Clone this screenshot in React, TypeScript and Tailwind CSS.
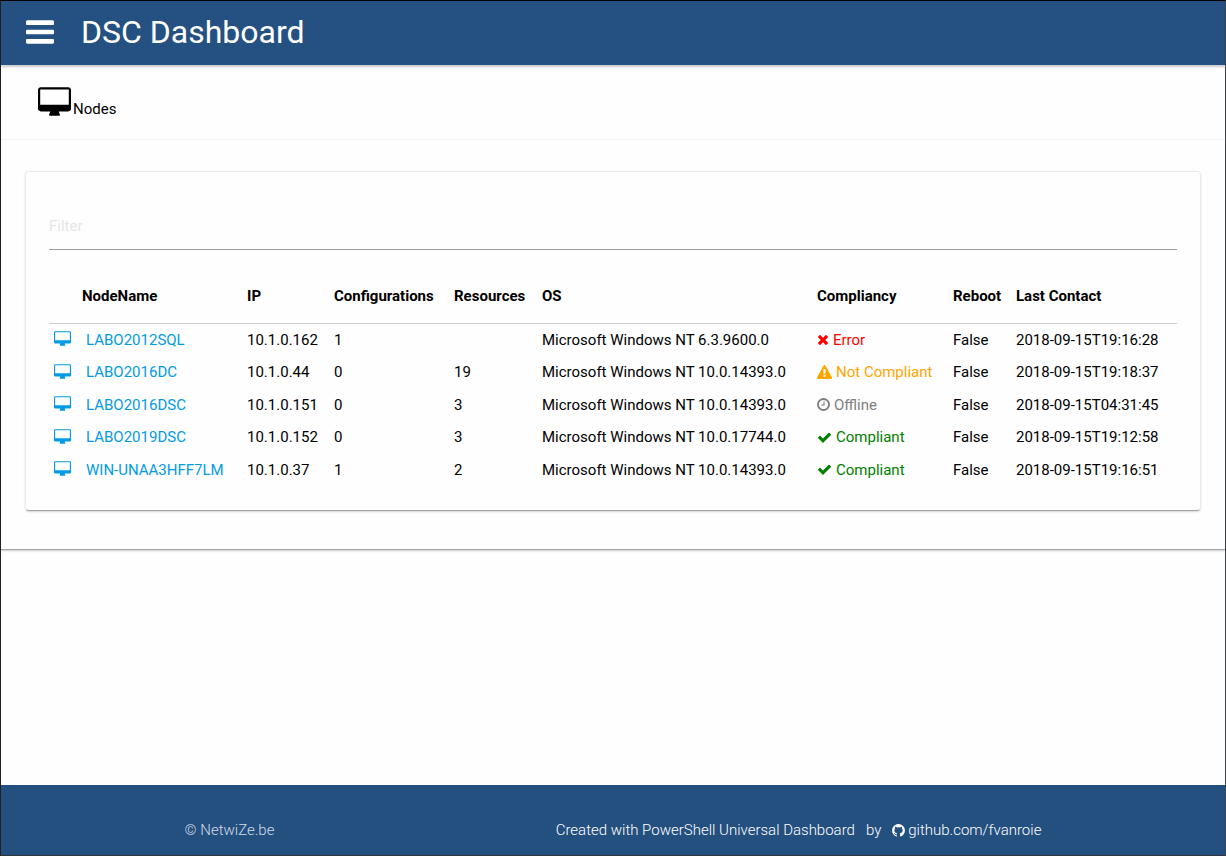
import React from "react";

const PATHS = {
  bars: "M1664 1344v128q0 26-19 45t-45 19h-1408q-26 0-45-19t-19-45v-128q0-26 19-45t45-19h1408q26 0 45 19t19 45zm0-512v128q0 26-19 45t-45 19h-1408q-26 0-45-19t-19-45v-128q0-26 19-45t45-19h1408q26 0 45 19t19 45zm0-512v128q0 26-19 45t-45 19h-1408q-26 0-45-19t-19-45v-128q0-26 19-45t45-19h1408q26 0 45 19t19 45z",
  desktop:
    "M1792 992v-832q0-13-9.5-22.5t-22.5-9.5h-1600q-13 0-22.5 9.5t-9.5 22.5v832q0 13 9.5 22.5t22.5 9.5h1600q13 0 22.5-9.5t9.5-22.5zm128-832v1088q0 66-47 113t-113 47h-544q0 37 16 77.5t32 71 16 43.5q0 26-19 45t-45 19h-512q-26 0-45-19t-19-45q0-14 16-44t32-70 16-78h-544q-66 0-113-47t-47-113v-1088q0-66 47-113t113-47h1600q66 0 113 47t47 113z",
  times:
    "M1490 1322q0 40-28 68l-136 136q-28 28-68 28t-68-28l-294-294-294 294q-28 28-68 28t-68-28l-136-136q-28-28-28-68t28-68l294-294-294-294q-28-28-28-68t28-68l136-136q28-28 68-28t68 28l294 294 294-294q28-28 68-28t68 28l136 136q28 28 28 68t-28 68l-294 294 294 294q28 28 28 68z",
  warning:
    "M1024 1375v-190q0-14-9.5-23.5t-22.5-9.5h-192q-13 0-22.5 9.5t-9.5 23.5v190q0 14 9.5 23.5t22.5 9.5h192q13 0 22.5-9.5t9.5-23.5zm-2-374l18-459q0-12-10-19-13-11-24-11h-220q-11 0-24 11-10 7-10 21l17 457q0 10 10 16.5t24 6.5h185q14 0 23.5-6.5t10.5-16.5zm-14-934l768 1408q35 63-2 126-17 29-46.5 46t-63.5 17h-1536q-34 0-63.5-17t-46.5-46q-37-63-2-126l768-1408q17-31 47-49t65-18 65 18 47 49z",
  clock:
    "M1024 544v448q0 14-9 23t-23 9h-320q-14 0-23-9t-9-23v-64q0-14 9-23t23-9h224v-352q0-14 9-23t23-9h64q14 0 23 9t9 23zm416 352q0-148-73-273t-198-198-273-73-273 73-198 198-73 273 73 273 198 198 273 73 273-73 198-198 73-273zm224 0q0 209-103 385.5t-279.5 279.5-385.5 103-385.5-103-279.5-279.5-103-385.5 103-385.5 279.5-279.5 385.5-103 385.5 103 279.5 279.5 103 385.5z",
  check:
    "M1671 566q0 40-28 68l-724 724-136 136q-28 28-68 28t-68-28l-136-136-362-362q-28-28-28-68t28-68l136-136q28-28 68-28t68 28l294 295 656-657q28-28 68-28t68 28l136 136q28 28 28 68z",
  github:
    "M896 128q209 0 385.5 103t279.5 279.5 103 385.5q0 251-146.5 451.5t-378.5 277.5q-27 5-40-7t-13-30q0-3 .5-76.5t.5-134.5q0-97-52-142 57-6 102.5-18t94-39 81-66.5 53-105 20.5-150.5q0-119-79-206 37-91-8-204-28-9-81 11t-92 44l-38 24q-93-26-192-26t-192 26q-16-11-42.5-27t-83.5-38.5-85-13.5q-45 113-8 204-79 87-79 206 0 85 20.5 150t52.5 105 80.5 67 94 39 102.5 18q-39 36-49 103-21 10-45 15t-57 5-65.5-21.5-55.5-62.5q-19-32-48.5-52t-49.5-24l-20-3q-21 0-29 4.5t-5 11.5 9 14 13 12l7 5q22 10 43.5 38t31.5 51l10 23q13 38 44 61.5t67 30 69.5 7 55.5-3.5l23-4q0 38 .5 88.5t.5 54.5q0 18-13 30t-40 7q-232-77-378.5-277.5t-146.5-451.5q0-209 103-385.5t279.5-279.5 385.5-103z",
};

const VIEW_BOXES: Record<keyof typeof PATHS, string> = {
  bars: "128 256 1536 1280",
  desktop: "0 0 1920 1664",
  times: "192 0 1408 1792",
  warning: "0 0 1792 1792",
  clock: "128 0 1536 1792",
  check: "0 0 1792 1792",
  github: "128 0 1536 1792",
};

function Icon({ name, className }: { name: keyof typeof PATHS; className: string }) {
  return (
    <svg viewBox={VIEW_BOXES[name]} fill="currentColor" aria-hidden="true" className={`shrink-0 ${className}`}>
      <path d={PATHS[name]} />
    </svg>
  );
}

type Status = "Error" | "Not Compliant" | "Offline" | "Compliant";

const STATUS: Record<Status, { icon: keyof typeof PATHS; size: string; color: string }> = {
  Error: { icon: "times", size: "w-3 h-[15px]", color: "text-[#ff0000]" },
  "Not Compliant": { icon: "warning", size: "w-[15px] h-[15px]", color: "text-[#ffa500]" },
  Offline: { icon: "clock", size: "w-[13px] h-[15px]", color: "text-[#808080]" },
  Compliant: { icon: "check", size: "w-[15px] h-[15px]", color: "text-[#008000]" },
};

interface NodeRow {
  name: string;
  ip: string;
  configurations: string;
  resources: string;
  os: string;
  status: Status;
  reboot: string;
  lastContact: string;
}

const NODES: NodeRow[] = [
  { name: "LABO2012SQL", ip: "10.1.0.162", configurations: "1", resources: "", os: "Microsoft Windows NT 6.3.9600.0", status: "Error", reboot: "False", lastContact: "2018-09-15T19:16:28" },
  { name: "LABO2016DC", ip: "10.1.0.44", configurations: "0", resources: "19", os: "Microsoft Windows NT 10.0.14393.0", status: "Not Compliant", reboot: "False", lastContact: "2018-09-15T19:18:37" },
  { name: "LABO2016DSC", ip: "10.1.0.151", configurations: "0", resources: "3", os: "Microsoft Windows NT 10.0.14393.0", status: "Offline", reboot: "False", lastContact: "2018-09-15T04:31:45" },
  { name: "LABO2019DSC", ip: "10.1.0.152", configurations: "0", resources: "3", os: "Microsoft Windows NT 10.0.17744.0", status: "Compliant", reboot: "False", lastContact: "2018-09-15T19:12:58" },
  { name: "WIN-UNAA3HFF7LM", ip: "10.1.0.37", configurations: "1", resources: "2", os: "Microsoft Windows NT 10.0.14393.0", status: "Compliant", reboot: "False", lastContact: "2018-09-15T19:16:51" },
];

const HEADINGS = ["", "NodeName", "IP", "Configurations", "Resources", "OS", "Compliancy", "Reboot", "Last Contact"];

function NodesTable() {
  return (
    <table className="w-full table-fixed border-collapse text-left whitespace-nowrap">
      <colgroup>
        <col className="w-[33px]" />
        <col className="w-[165px]" />
        <col className="w-[87px]" />
        <col className="w-[120px]" />
        <col className="w-[88px]" />
        <col className="w-[275px]" />
        <col className="w-[136px]" />
        <col className="w-[63px]" />
        <col className="w-[161px]" />
      </colgroup>
      <thead>
        <tr className="h-[53px] border-b border-[#d0d0d0]">
          {HEADINGS.map((heading) => (
            <th key={heading} scope="col" className="p-0 font-bold">
              {heading}
            </th>
          ))}
        </tr>
      </thead>
      <tbody>
        {NODES.map((node) => {
          const status = STATUS[node.status];
          return (
            <tr key={node.name} className="odd:h-[33px] even:h-8">
              <td className="p-0 pb-0.5 pl-[5px] text-[#039be5]">
                <Icon name="desktop" className="h-[15px] w-[17px]" />
              </td>
              <td className="p-0 pl-1">
                <a href="#" className="text-[#039be5]">{node.name}</a>
              </td>
              <td className="p-0">{node.ip}</td>
              <td className="p-0">{node.configurations}</td>
              <td className="p-0">{node.resources}</td>
              <td className="p-0">{node.os}</td>
              <td className="p-0">
                <span className={`flex items-center gap-1 ${status.color}`}>
                  <Icon name={status.icon} className={status.size} />
                  {node.status}
                </span>
              </td>
              <td className="p-0">{node.reboot}</td>
              <td className="p-0">{node.lastContact}</td>
            </tr>
          );
        })}
      </tbody>
    </table>
  );
}

export default function App() {
  return (
    <div className="flex min-h-screen flex-col border border-t-black border-r-[#3d464d] border-b-[#30353b] border-l-[#222222] bg-[#fefefe] font-[Roboto,sans-serif] text-[15px] leading-[22px] text-black">
      <header className="relative flex h-16 items-center gap-[27px] bg-[#245182] pb-0.5 pl-[25px] text-white shadow-[0_2px_2px_rgba(0,0,0,0.2)]">
        <button type="button" aria-label="Open menu">
          <Icon name="bars" className="h-6 w-7" />
        </button>
        <h1 className="text-[32px] leading-10">DSC Dashboard</h1>
      </header>

      <main className="border-b border-[#a3a3a3] shadow-[0_1px_2px_rgba(0,0,0,0.2)]">
        <div className="flex h-[75px] items-end gap-0.5 border-b border-[#f2f2f2] pb-[19px] pl-[37px]">
          <Icon name="desktop" className="mb-1 h-[29px] w-[33px]" />
          <h2>Nodes</h2>
        </div>

        <div className="px-6 pt-[31px] pb-[38px]">
          <section className="rounded-sm border border-[#ebebeb] border-b-[#a3a3a3] px-[23px] pb-6 shadow-[0_1px_2px_rgba(0,0,0,0.15)]">
            <input
              type="text"
              aria-label="Filter"
              placeholder="Filter"
              className="mt-[30px] mb-5 h-12 w-full border-b border-[#9e9e9e] bg-transparent outline-none placeholder:text-[#e6e6e6]"
            />
            <NodesTable />
          </section>
        </div>
      </main>

      <footer className="mt-auto h-[70px] bg-[#245080] pt-[34px] font-light text-white">
        <div className="mx-auto flex w-[70%] justify-between">
          <span className="text-[#d3dce6]">© NetwiZe.be</span>
          <div className="flex">
            <span>Created with PowerShell Universal Dashboard</span>
            <span className="ml-[11px]">by</span>
            <a href="https://github.com/fvanroie" className="ml-[11px] flex items-center gap-[3px]">
              <Icon name="github" className="h-[15px] w-[13px]" />
              github.com/fvanroie
            </a>
          </div>
        </div>
      </footer>
    </div>
  );
}
